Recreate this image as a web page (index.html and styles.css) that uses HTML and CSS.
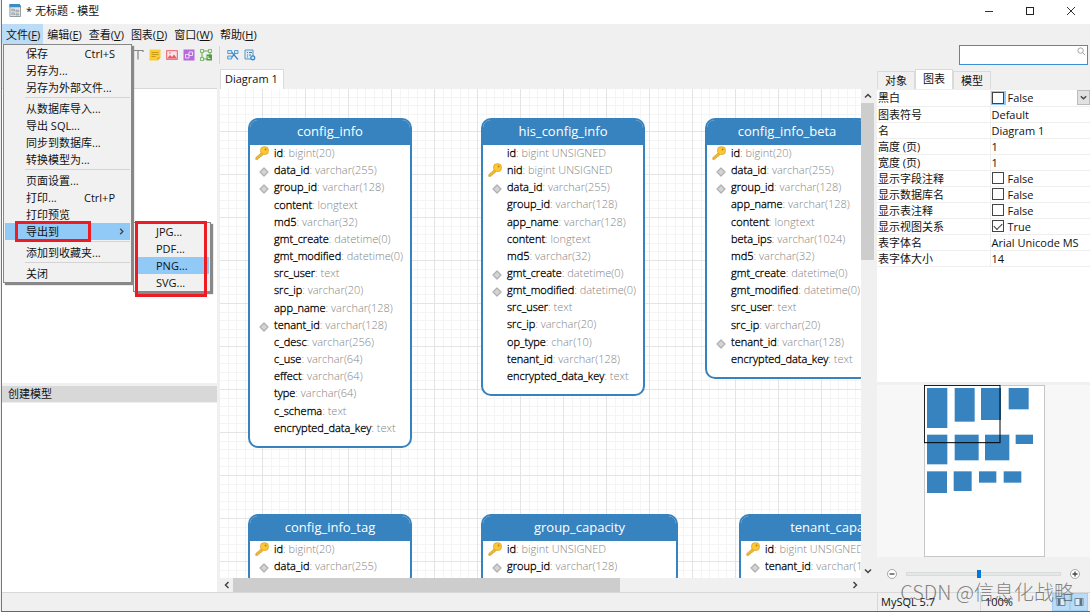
FILE: index.html
```html
<!DOCTYPE html>
<html lang="zh-CN">
<head>
<meta charset="utf-8">
<title>* 无标题 - 模型</title>
<link rel="stylesheet" href="styles.css">
</head>
<body>
<svg class="defs" aria-hidden="true">
  <symbol id="key" viewBox="0 0 14 14">
    <path d="M7 6.2L.8 11.6v1.8l2.2-.2.3-1.2 1.3-.1.2-1.3 1.4-.2 2-1.9z" fill="#f4b92e" stroke="#d49a2a" stroke-width=".7"/>
    <rect x="5.6" y=".8" width="7.8" height="7.6" rx="3" fill="#fcc934" stroke="#dda22a" stroke-width=".8"/>
    <circle cx="10.6" cy="3.6" r="1" fill="#b98324"/>
  </symbol>
  <symbol id="diamond" viewBox="0 0 10 10">
    <path d="M5 1L9 5 5 9 1 5z" fill="#d4d4d4" stroke="#b0b0b0" stroke-width="1.2" stroke-linejoin="round"/>
  </symbol>
  <symbol id="chev" viewBox="0 0 10 10">
    <path d="M2 6.5L5 3.5l3 3" fill="none" stroke="#444" stroke-width="1.5"/>
  </symbol>
</svg>
<div class="window">
  <header class="titlebar">
    <svg class="app-icon" viewBox="0 0 13 15">
      <path d="M1 1h10l1.5 1.5V14H1z" fill="#e4e7e9" stroke="#8b969d"/>
      <path d="M.5.5h10.8l1.2 1.3V4H.5z" fill="#3d8cc4"/>
      <path d="M3 6h3v2H3zM7.500 7h3v2h-3zM3 10h3v2H3zM7.500 11h3v1.500h-3z" fill="#c9ced1" stroke="#8b969d" stroke-width=".7"/>
    </svg>
    <h1 class="title">* 无标题 - 模型</h1>
    <div class="controls">
      <button aria-label="最小化"><svg viewBox="0 0 10 10"><path d="M1 5.500h8" stroke="#333"/></svg></button>
      <button aria-label="最大化"><svg viewBox="0 0 10 10"><rect x="1.500" y="1.500" width="7" height="7" fill="none" stroke="#222"/></svg></button>
      <button aria-label="关闭"><svg viewBox="0 0 10 10"><path d="M1 1l8 8M9 1L1 9" stroke="#333"/></svg></button>
    </div>
  </header>

  <nav class="menubar">
    <button class="open">文件(<u>F</u>)</button>
    <button>编辑(<u>E</u>)</button>
    <button>查看(<u>V</u>)</button>
    <button>图表(<u>D</u>)</button>
    <button>窗口(<u>W</u>)</button>
    <button>帮助(<u>H</u>)</button>
  </nav>

  <div class="toolbar">
    <div class="tools">
      <button aria-label="文本"><svg viewBox="0 0 12 12"><path d="M1 3V1.500h10V3M6 1.500v9" fill="none" stroke="#858585" stroke-width="1.200"/></svg></button>
      <button aria-label="注释"><svg viewBox="0 0 12 12"><path d="M.5.5h11v8l-3 3h-8z" fill="#fccb2d"/><path d="M2.500 3.500h7M2.500 5.500h7M2.500 7.500h4" stroke="#b88b1a" stroke-width=".8"/><path d="M11.500 8.500h-3v3z" fill="#dca51c"/></svg></button>
      <button aria-label="图像"><svg viewBox="0 0 12 12"><rect x=".7" y="1.700" width="10.600" height="8.600" fill="#fbe4e6" stroke="#ea5a68"/><path d="M1 9.500l3-3.500 2 2 2-2.500 3 4z" fill="#ea5a68"/><circle cx="4" cy="4" r=".8" fill="#ea5a68"/></svg></button>
      <button aria-label="图层"><svg viewBox="0 0 12 12"><rect x=".5" y=".5" width="11" height="11" fill="#b868dd"/><path d="M2.500 5.500h3.500v3.500H2.500zM6 3h3.500v3.500H6z" fill="none" stroke="#f5e6fb" stroke-width=".9"/></svg></button>
      <button aria-label="区域"><svg viewBox="0 0 12 12"><path d="M2 2h8v8H2z" fill="none" stroke="#63a84f"/><path d="M.5.5h3v3h-3zM8.500.5h3v3h-3zM.5 8.500h3v3h-3z" fill="#e8f5e4" stroke="#63a84f" stroke-width=".8"/><rect x="6.500" y="5.500" width="5.500" height="6" fill="#4f9e3a"/><path d="M8 7v2.500h2.500" stroke="#fff" fill="none" stroke-width=".8"/></svg></button>
      <span class="tool-sep"></span>
      <button aria-label="自动布局"><svg viewBox="0 0 12 12"><path d="M4.500 3L11 10.500M4.500 8.500L8.500 4" fill="none" stroke="#3987c5" stroke-width="1.200"/><path d="M.7 1.500h4v3h-4zM.7 7h4v3h-4zM7.500 1.500h3.500v3H7.500z" fill="#cfe6f6" stroke="#4f94c9" stroke-width=".9"/></svg></button>
      <button aria-label="图表设置"><svg viewBox="0 0 12 12"><path d="M1 1h8v9H1z" fill="#dcebf5" stroke="#5c94bd"/><path d="M3 3.500h1M5 3.500h3M3 6h1M5 6h2M3 8h1" stroke="#3c7fb1"/><circle cx="8.800" cy="8.800" r="2" fill="#cfe5f5" stroke="#3987c5" stroke-width="1.200"/></svg></button>
    </div>
    <label class="search">
      <input type="search" aria-label="搜索">
      <svg viewBox="0 0 10 10"><circle cx="4" cy="4" r="3" fill="none" stroke="#999"/><path d="M6.300 6.300L9 9" stroke="#999"/></svg>
    </label>
  </div>

  <main class="workspace">
    <aside class="left">
      <section class="panel history"></section>
      <h2 class="panel-title">创建模型</h2>
      <section class="panel models"></section>
    </aside>

    <section class="center">
      <div class="tabs"><button class="tab active">Diagram 1</button></div>
      <div class="canvas-wrap">
        <div class="canvas">
          <svg class="grid" aria-hidden="true">
            <defs>
              <pattern id="gridlines" width="43" height="43" x="42" y="42" patternUnits="userSpaceOnUse">
                <path d="M9.500 0v43M17.500 0v43M26.500 0v43M34.500 0v43M0 9.500h43M0 17.500h43M0 26.500h43M0 34.500h43" stroke="#f4f4f4"/>
                <path d="M.5 0v43M0 .5h43" stroke="#e4e4e4"/>
              </pattern>
            </defs>
            <rect width="100%" height="100%" fill="url(#gridlines)"/>
          </svg>

          <article class="entity config-info">
            <h3>config_info</h3>
            <ul>
              <li><svg class="key"><use href="#key"/></svg><b>id</b>: bigint(20)</li>
              <li><svg class="dia"><use href="#diamond"/></svg><b>data_id</b>: varchar(255)</li>
              <li><svg class="dia"><use href="#diamond"/></svg><b>group_id</b>: varchar(128)</li>
              <li><b>content</b>: longtext</li>
              <li><b>md5</b>: varchar(32)</li>
              <li><b>gmt_create</b>: datetime(0)</li>
              <li><b>gmt_modified</b>: datetime(0)</li>
              <li><b>src_user</b>: text</li>
              <li><b>src_ip</b>: varchar(20)</li>
              <li><b>app_name</b>: varchar(128)</li>
              <li><svg class="dia"><use href="#diamond"/></svg><b>tenant_id</b>: varchar(128)</li>
              <li><b>c_desc</b>: varchar(256)</li>
              <li><b>c_use</b>: varchar(64)</li>
              <li><b>effect</b>: varchar(64)</li>
              <li><b>type</b>: varchar(64)</li>
              <li><b>c_schema</b>: text</li>
              <li><b>encrypted_data_key</b>: text</li>
            </ul>
          </article>

          <article class="entity his-config-info">
            <h3>his_config_info</h3>
            <ul>
              <li><b>id</b>: bigint UNSIGNED</li>
              <li><svg class="key"><use href="#key"/></svg><b>nid</b>: bigint UNSIGNED</li>
              <li><svg class="dia"><use href="#diamond"/></svg><b>data_id</b>: varchar(255)</li>
              <li><b>group_id</b>: varchar(128)</li>
              <li><b>app_name</b>: varchar(128)</li>
              <li><b>content</b>: longtext</li>
              <li><b>md5</b>: varchar(32)</li>
              <li><svg class="dia"><use href="#diamond"/></svg><b>gmt_create</b>: datetime(0)</li>
              <li><svg class="dia"><use href="#diamond"/></svg><b>gmt_modified</b>: datetime(0)</li>
              <li><b>src_user</b>: text</li>
              <li><b>src_ip</b>: varchar(20)</li>
              <li><b>op_type</b>: char(10)</li>
              <li><b>tenant_id</b>: varchar(128)</li>
              <li><b>encrypted_data_key</b>: text</li>
            </ul>
          </article>

          <article class="entity config-info-beta">
            <h3>config_info_beta</h3>
            <ul>
              <li><svg class="key"><use href="#key"/></svg><b>id</b>: bigint(20)</li>
              <li><svg class="dia"><use href="#diamond"/></svg><b>data_id</b>: varchar(255)</li>
              <li><svg class="dia"><use href="#diamond"/></svg><b>group_id</b>: varchar(128)</li>
              <li><b>app_name</b>: varchar(128)</li>
              <li><b>content</b>: longtext</li>
              <li><b>beta_ips</b>: varchar(1024)</li>
              <li><b>md5</b>: varchar(32)</li>
              <li><b>gmt_create</b>: datetime(0)</li>
              <li><b>gmt_modified</b>: datetime(0)</li>
              <li><b>src_user</b>: text</li>
              <li><b>src_ip</b>: varchar(20)</li>
              <li><svg class="dia"><use href="#diamond"/></svg><b>tenant_id</b>: varchar(128)</li>
              <li><b>encrypted_data_key</b>: text</li>
            </ul>
          </article>

          <article class="entity config-info-tag">
            <h3>config_info_tag</h3>
            <ul>
              <li><svg class="key"><use href="#key"/></svg><b>id</b>: bigint(20)</li>
              <li><svg class="dia"><use href="#diamond"/></svg><b>data_id</b>: varchar(255)</li>
            </ul>
          </article>
          <article class="entity group-capacity">
            <h3>group_capacity</h3>
            <ul>
              <li><svg class="key"><use href="#key"/></svg><b>id</b>: bigint UNSIGNED</li>
              <li><svg class="dia"><use href="#diamond"/></svg><b>group_id</b>: varchar(128)</li>
            </ul>
          </article>
          <article class="entity tenant-capacity">
            <h3>tenant_capacity</h3>
            <ul>
              <li><svg class="key"><use href="#key"/></svg><b>id</b>: bigint UNSIGNED</li>
              <li><svg class="dia"><use href="#diamond"/></svg><b>tenant_id</b>: varchar(128)</li>
            </ul>
          </article>
        </div>
        <div class="vscroll">
          <button aria-label="向上"><svg><use href="#chev"/></svg></button>
          <div class="track"><span class="thumb"></span></div>
          <button aria-label="向下" class="down"><svg><use href="#chev"/></svg></button>
        </div>
        <div class="hscroll">
          <button aria-label="向左" class="prev"><svg><use href="#chev"/></svg></button>
          <div class="track"><span class="thumb"></span></div>
          <button aria-label="向右" class="next"><svg><use href="#chev"/></svg></button>
        </div>
      </div>
    </section>

    <aside class="right">
      <div class="tabs">
        <button class="tab">对象</button>
        <button class="tab active">图表</button>
        <button class="tab">模型</button>
      </div>
      <div class="props">
        <table>
          <tr><th><label for="bw">黑白</label></th><td class="editing"><span class="cell"><span class="focus"><input type="checkbox" id="bw"></span>False<button class="drop" aria-label="展开"><svg><use href="#chev"/></svg></button></span></td></tr>
          <tr><th>图表符号</th><td>Default</td></tr>
          <tr><th>名</th><td>Diagram 1</td></tr>
          <tr><th>高度 (页)</th><td>1</td></tr>
          <tr><th>宽度 (页)</th><td>1</td></tr>
          <tr><th><label for="fc">显示字段注释</label></th><td><span class="cell"><input type="checkbox" id="fc">False</span></td></tr>
          <tr><th><label for="db">显示数据库名</label></th><td><span class="cell"><input type="checkbox" id="db">False</span></td></tr>
          <tr><th><label for="tc">显示表注释</label></th><td><span class="cell"><input type="checkbox" id="tc">False</span></td></tr>
          <tr><th><label for="vr">显示视图关系</label></th><td><span class="cell"><input type="checkbox" id="vr" checked>True</span></td></tr>
          <tr><th>表字体名</th><td>Arial Unicode MS</td></tr>
          <tr><th>表字体大小</th><td>14</td></tr>
        </table>
      </div>
      <div class="preview">
        <svg viewBox="0 0 363 516">
          <rect x="1" y="1" width="361" height="514" fill="#fff" stroke="#bcbcbc" stroke-width="3"/>
          <g fill="#3783c0">
            <rect x="9" y="9" width="61" height="120"/><rect x="92" y="9" width="60" height="101"/><rect x="171" y="9" width="60" height="96"/><rect x="254" y="9" width="60" height="64"/>
            <rect x="9" y="149" width="61" height="89"/><rect x="92" y="149" width="72" height="77"/><rect x="183" y="149" width="73" height="77"/><rect x="275" y="149" width="52" height="28"/>
            <rect x="9" y="259" width="60" height="65"/><rect x="89" y="259" width="54" height="59"/><rect x="165" y="259" width="52" height="34"/><rect x="239" y="259" width="53" height="34"/>
          </g>
          <rect x="1" y="1" width="227" height="172" fill="none" stroke="#000" stroke-width="3"/>
        </svg>
      </div>
      <div class="zoom">
        <button aria-label="缩小"><svg viewBox="0 0 10 10"><circle cx="5" cy="5" r="4.500" fill="#fff" stroke="#888" stroke-width=".7"/><path d="M2.500 5h5" stroke="#444" stroke-width="1.300"/></svg></button>
        <input type="range" min="0" max="100" value="47" aria-label="缩放">
        <button aria-label="放大"><svg viewBox="0 0 10 10"><circle cx="5" cy="5" r="4.500" fill="#fff" stroke="#888" stroke-width=".7"/><path d="M2.500 5h5M5 2.500v5" stroke="#444" stroke-width="1.300"/></svg></button>
      </div>
    </aside>
  </main>

  <footer class="status">
    <span class="db">MySQL 5.7</span>
    <span class="percent">100%</span>
    <button aria-label="左侧面板"><svg viewBox="0 0 10 10"><path d="M1 1.500h8v7H1z" fill="#dcecf8" stroke="#6d8798"/><path d="M2 2h2.500v6H2z" fill="#5a7486"/></svg></button>
    <button aria-label="右侧面板"><svg viewBox="0 0 10 10"><path d="M1 1.500h8v7H1z" fill="#dcecf8" stroke="#6d8798"/><path d="M5.500 2H8v6H5.500z" fill="#5a7486"/></svg></button>
  </footer>
</div>

<div class="menu file-menu" role="menu">
  <button>保存<kbd>Ctrl+S</kbd></button>
  <button>另存为...</button>
  <button>另存为外部文件...</button>
  <hr>
  <button>从数据库导入...</button>
  <button>导出 SQL...</button>
  <button>同步到数据库...</button>
  <button>转换模型为...</button>
  <hr>
  <button>页面设置...</button>
  <button>打印...<kbd>Ctrl+P</kbd></button>
  <button>打印预览</button>
  <button class="selected">导出到<svg class="arrow"><use href="#chev"/></svg></button>
  <hr>
  <button>添加到收藏夹...</button>
  <hr>
  <button>关闭</button>
</div>
<div class="menu export-menu" role="menu">
  <button>JPG...</button>
  <button>PDF...</button>
  <button class="selected">PNG...</button>
  <button>SVG...</button>
</div>
<div class="mark mark-item"></div>
<div class="mark mark-sub"></div>
<div class="watermark">CSDN @信息化战略</div>
</body>
</html>
```
FILE: styles.css
```css
* { box-sizing: border-box; }

body {
  margin: 0;
  background: #f0f0f0;
  color: #111;
  font: 11px/16px "Open Sans", "Noto Sans CJK SC", sans-serif;
  position: relative;
  overflow: hidden;
}

button {
  margin: 0;
  padding: 0;
  border: 0;
  background: none;
  color: inherit;
  font: inherit;
}

svg { display: block; }
h1, h2, h3, ul { margin: 0; padding: 0; font: inherit; }
.defs { position: absolute; width: 0; height: 0; }

.window {
  display: flex;
  flex-direction: column;
  height: 100vh;
  border-left: 1px solid #777;
  border-bottom: 1px solid #666;
  margin-left: 1px;
}

/* Title bar */
.titlebar {
  display: flex;
  align-items: center;
  gap: 5px;
  height: 24px;
  padding: 0 14px 3px 7px;
  background: #fff;
}
.app-icon { width: 12px; height: 15px; }
.title { flex: 1; }
.controls { display: flex; gap: 31px; }
.controls svg { width: 10px; height: 10px; }

/* Menu bar */
.menubar {
  display: flex;
  height: 20px;
}
.menubar button { padding: 0 3px 0 4px; line-height: 21px; }
.menubar .open { background: #bbdcf7; }
.menubar u { text-underline-offset: 1px; }

/* Toolbar */
.toolbar {
  display: flex;
  justify-content: space-between;
  align-items: flex-start;
  height: 25px;
  padding: 1px 2px 0 130px;
}
.tools { display: flex; align-items: center; gap: 5px; padding-top: 1px; }
.tools svg { width: 12px; height: 12px; }
.tool-sep { width: 1px; height: 18px; margin: 0 2px; background: #d4d4d4; }
.search { position: relative; width: 129px; }
.search input {
  display: block;
  width: 100%;
  height: 20px;
  margin: 0;
  border: 1px solid #3d8fd1;
  background: #fff;
  font: inherit;
  appearance: none;
  outline: 0;
}
.search svg { position: absolute; top: 2px; right: 2px; width: 9px; height: 9px; }

/* Workspace */
.workspace {
  flex: 1;
  min-height: 0;
  display: grid;
  grid-template-columns: 215px minmax(0, 1fr) 213px;
  column-gap: 3px;
}

.left { display: flex; flex-direction: column; padding-top: 19px; }
.panel { background: #fff; border-top: 1px solid #d8d8d8; }
.history { flex: 295; margin-bottom: 3px; }
.models { flex: 190; border-top-color: #eee; }
.panel-title { padding: 0 6px; background: #d8d8d8; }

.tabs { display: flex; align-items: flex-end; height: 20px; }
.tab {
  height: 18px;
  padding: 0 7px;
  border: 1px solid #dadada;
  border-bottom: 0;
}
.tab.active { height: 20px; padding-bottom: 2px; background: #fff; }

.center { display: flex; flex-direction: column; }
.center .tab { padding: 0 5px 2px 4px; }
.canvas-wrap {
  flex: 1;
  min-height: 0;
  display: grid;
  grid-template-columns: minmax(0, 1fr) 13px;
  grid-template-rows: minmax(0, 1fr) 14px;
}
.canvas { position: relative; overflow: hidden; background: #fff; }
.grid { width: 100%; height: 100%; }

/* Scroll bars */
.vscroll, .hscroll { display: flex; background: #f0f0f0; }
.vscroll { flex-direction: column; }
.vscroll button, .hscroll button { display: grid; place-items: center; width: 13px; height: 14px; }
.vscroll svg, .hscroll svg { width: 10px; height: 10px; }
.down svg { transform: rotate(180deg); }
.prev svg { transform: rotate(-90deg); }
.next svg { transform: rotate(90deg); }
.track { flex: 1; display: flex; }
.thumb { background: #cdcdcd; }
.vscroll .thumb { width: 100%; height: 34%; }
.hscroll .thumb { width: 63%; }

/* Diagram entities */
.entity {
  position: absolute;
  display: flex;
  flex-direction: column;
  width: 164px;
  padding-bottom: 9px;
  border: 2px solid #3783c0;
  border-radius: 10px;
  background: #fff;
  overflow: hidden;
}
.entity h3 {
  height: 25px;
  background: #3783c0;
  color: #fff;
  font-size: 13px;
  line-height: 23px;
  text-align: center;
}
.entity ul {
  flex: 1;
  display: grid;
  grid-auto-rows: 1fr;
  list-style: none;
}
.entity li {
  position: relative;
  padding-left: 24px;
  color: #858585;
  font-weight: 300;
  white-space: nowrap;
}
.entity b { color: #000; font-weight: 300; -webkit-text-stroke: 0.3px #000; }
.key { position: absolute; left: 5px; top: 1px; width: 14px; height: 14px; }
.dia { position: absolute; left: 9px; top: 5px; width: 10px; height: 10px; }

.config-info { left: 28px; top: 29px; height: 330px; }
.his-config-info { left: 261px; top: 29px; height: 278px; }
.config-info-beta { left: 485px; top: 29px; height: 261px; }
.config-info-tag { left: 28px; top: 425px; height: 72px; }
.group-capacity { left: 261px; top: 425px; width: 197px; height: 72px; }
.tenant-capacity { left: 519px; top: 425px; width: 197px; height: 72px; }

/* Right column */
.right { display: flex; flex-direction: column; }
.props { flex: 1; background: #fff; border-top: 1px solid #eee; }
.props table { width: 100%; border-collapse: collapse; table-layout: fixed; }
.props th, .props td {
  height: 16px;
  padding: 0 1px;
  border-bottom: 1px solid #eee;
  font-weight: 400;
  line-height: 15px;
  text-align: left;
  white-space: nowrap;
}
.props th { width: 113px; border-right: 1px solid #eee; }
.props td.editing { padding: 0; }
.cell { display: flex; align-items: center; gap: 4px; height: 15px; }
.editing .cell { gap: 2px; }
.focus { padding: 1px 2px 1px 1px; background: #91c9f7; }
.props input {
  display: block;
  width: 12px;
  height: 12px;
  margin: 0;
  border: 1px solid #444;
  background: #fff;
  appearance: none;
}
.props input:checked::after {
  content: "";
  display: block;
  width: 7px;
  height: 4px;
  margin: 2px 1px;
  border: solid #333;
  border-width: 0 0 1px 1px;
  transform: rotate(-45deg);
}
.drop {
  display: grid;
  place-items: center;
  width: 13px;
  height: 15px;
  margin-left: auto;
  border: 1px solid #bbb;
  background: #e1e1e1;
}
.drop svg { width: 9px; height: 9px; transform: rotate(180deg); }
.preview {
  margin-top: 3px;
  background: #f7f7f7;
}
.preview svg { width: 121px; height: 172px; margin-left: 47px; }
.zoom { display: flex; align-items: center; justify-content: center; gap: 9px; height: 35px; padding: 0 0 2px; }
.zoom svg { width: 10px; height: 10px; }
.zoom input { width: 155px; height: 10px; margin: 0; appearance: none; background: none; }
.zoom input::-webkit-slider-runnable-track { height: 4px; background: #e3e8e8; border: 1px solid #dadada; }
.zoom input::-webkit-slider-thumb { appearance: none; width: 4px; height: 8px; margin-top: -3px; background: #0078d7; }

/* Status bar */
.status {
  display: flex;
  justify-content: flex-end;
  height: 19px;
  padding-right: 2px;
  border-top: 1px solid #d8d8d8;
  line-height: 18px;
}
.db { width: 103px; padding-left: 3px; border-left: 1px solid #d8d8d8; }
.percent { width: 72px; padding-left: 4px; border-left: 1px solid #d8d8d8; }
.status button { display: grid; place-items: center; width: 18px; background: #b9dbf5; border: 1px solid #a4cff0; }
.status svg { width: 10px; height: 10px; }

/* Drop-down menus */
.menu {
  position: absolute;
  padding: 0 1px;
  border: 1px solid #888;
  background: #f1f1f1;
  box-shadow: 2px 2px 1px #888;
}
.menu button {
  display: flex;
  align-items: center;
  width: 100%;
  height: 17px;
  text-align: left;
}
.menu hr { height: 1px; margin: 1px 0 2px 20px; border: 0; background: #d4d4d4; }
.menu .selected { background: #91c9f7; }
.menu kbd { margin-left: auto; padding-right: 15px; font: inherit; }
.arrow { width: 9px; height: 9px; margin: 0 4px 0 auto; transform: rotate(90deg); }
.file-menu { left: 3px; top: 44px; width: 129px; }
.file-menu button { padding-left: 21px; }
.export-menu { left: 133px; top: 222px; width: 78px; }
.export-menu button { padding-left: 21px; }

/* Highlight frames */
.mark { position: absolute; border: 3px solid #ec1c24; }
.mark-item { left: 15px; top: 221px; width: 76px; height: 21px; }
.mark-sub { left: 135px; top: 221px; width: 72px; height: 76px; }

.watermark {
  position: absolute;
  right: 16px;
  bottom: 8px;
  color: rgba(80, 80, 80, .7);
  font: 300 20px/24px "Noto Sans CJK SC", sans-serif;
}
```
